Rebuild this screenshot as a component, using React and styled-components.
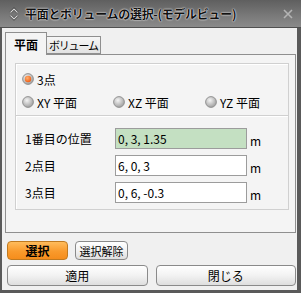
import React from 'react';
import styled, { createGlobalStyle } from 'styled-components';

const GlobalStyle = createGlobalStyle`
  html, body {
    margin: 0;
    padding: 0;
    background: #f0f0f0;
  }
  body {
    font-family: "Noto Sans CJK JP", "Noto Sans", sans-serif;
    font-size: 12px;
    color: #000;
  }
`;

const Window = styled.div`
  width: 301px;
  height: 293px;
  box-sizing: border-box;
  display: flex;
  flex-direction: column;
  background: #f0f0f0;
  border-left: 2px solid #5a5a5a;
  border-right: 4px solid #5a5a5a;
  border-bottom: 3px solid #5a5a5a;
`;

const TitleBar = styled.div`
  height: 28px;
  margin: 0 -4px 0 -2px;
  display: flex;
  align-items: center;
  padding: 0 8px 0 9px;
  box-sizing: border-box;
  background: linear-gradient(#5f5f5f, #7a7a7a 60%, #8a8a8a);
  border-bottom: 1px solid #505050;
`;

const Title = styled.div`
  flex: 1;
  margin-left: 6px;
  font-size: 12px;
  font-weight: 700;
  letter-spacing: -0.3px;
  color: #111;
  text-shadow: 0 0 2px #fff, 0 0 1px #fff;
  white-space: nowrap;
`;

const Body = styled.div`
  flex: 1;
  display: flex;
  flex-direction: column;
  padding: 4px 1px 0 3px;
`;

const Tabs = styled.div`
  display: flex;
  align-items: flex-end;
  height: 22px;
  position: relative;
  z-index: 1;
`;

const Tab = styled.div`
  box-sizing: border-box;
  height: ${p => (p.$active ? '23px' : '18px')};
  margin-bottom: ${p => (p.$active ? '-1px' : '0')};
  padding: 0 ${p => (p.$active ? '8px' : '2px')};
  display: flex;
  align-items: center;
  border: 1px solid #8f8f8f;
  border-bottom: ${p => (p.$active ? 'none' : '1px solid #8f8f8f')};
  background: ${p => (p.$active ? '#f4f4f4' : 'linear-gradient(#f6f6f6, #e2e2e2)')};
  font-weight: ${p => (p.$active ? 700 : 400)};
  font-size: ${p => (p.$active ? '12px' : '11px')};
  letter-spacing: ${p => (p.$active ? '0' : '-1.2px')};
  margin-left: ${p => (p.$active ? '0' : '-1px')};
`;

const Panel = styled.div`
  box-sizing: border-box;
  height: 179px;
  border: 1px solid #8f8f8f;
  background: #f4f4f4;
  padding: 8px 6px 0 9px;
  display: flex;
  flex-direction: column;
`;

const Group = styled.div`
  box-sizing: border-box;
  height: ${p => p.$h}px;
  border: 1px solid #d0d0d0;
  box-shadow: inset 1px 1px 0 #fff;
  padding: ${p => p.$pad};
  & + & {
    border-top: none;
  }
`;

const RadioGrid = styled.div`
  display: grid;
  grid-template-columns: 91px 92px 1fr;
  row-gap: 9px;
`;

const RadioLabel = styled.label`
  display: flex;
  align-items: center;
  gap: 3px;
  height: 14px;
  font-size: 12px;
  white-space: nowrap;
  grid-column: ${p => p.$full ? '1 / -1' : 'auto'};
`;

const Rows = styled.div`
  display: grid;
  grid-template-columns: 90px 132px 1fr;
  row-gap: 6px;
  align-items: center;
`;

const Label = styled.div`
  font-size: 12px;
  white-space: nowrap;
`;

const Field = styled.div`
  box-sizing: border-box;
  height: 21px;
  border: 1px solid #9c9c9c;
  background: ${p => (p.$hl ? '#c4e0c2' : '#fff')};
  padding: 0 2px;
  display: flex;
  align-items: center;
  font-size: 12px;
`;

const Unit = styled.div`
  padding-left: 3px;
  font-size: 12px;
  padding-top: 3px;
`;

const ButtonRow = styled.div`
  display: flex;
  gap: ${p => p.$gap}px;
  margin-top: ${p => p.$mt}px;
  padding-left: 2px;
`;

const Button = styled.button`
  box-sizing: border-box;
  height: ${p => p.$h}px;
  width: ${p => (p.$w ? `${p.$w}px` : 'auto')};
  flex: ${p => (p.$grow ? 1 : 'none')};
  border: 1px solid ${p => (p.$primary ? '#c07a20' : '#8a8a8a')};
  border-radius: 4px;
  background: ${p => (p.$primary
    ? 'linear-gradient(#ffbc5c, #f99a2c 55%, #f58d1c)'
    : 'linear-gradient(#ffffff, #f2f2f2 50%, #dedede)')};
  font-family: inherit;
  font-size: ${p => (p.$small ? '11px' : '12px')};
  font-weight: ${p => (p.$primary ? 700 : 400)};
  color: #000;
  padding: 0;
  white-space: nowrap;
  display: flex;
  align-items: center;
  justify-content: center;
`;

const SortIcon = () => (
  <svg width="10" height="14" viewBox="0 0 10 14">
    <path d="M1.5 5.5 L5 2 L8.5 5.5" fill="none" stroke="#3a3a3a" strokeWidth="2.4" />
    <path d="M1.5 5.5 L5 2 L8.5 5.5" fill="none" stroke="#d8d8d8" strokeWidth="1.1" />
    <path d="M1.5 8.5 L5 12 L8.5 8.5" fill="none" stroke="#3a3a3a" strokeWidth="2.4" />
    <path d="M1.5 8.5 L5 12 L8.5 8.5" fill="none" stroke="#d8d8d8" strokeWidth="1.1" />
  </svg>
);

const CloseIcon = () => (
  <svg width="10" height="10" viewBox="0 0 10 10">
    <path d="M1 1 L9 9 M9 1 L1 9" stroke="#b4b4b4" strokeWidth="1.6" />
  </svg>
);

const Radio = ({ checked }) => (
  <svg width="12" height="12" viewBox="0 0 12 12">
    <defs>
      <radialGradient id="rg" cx="40%" cy="35%" r="70%">
        <stop offset="0" stopColor="#f4f4f4" />
        <stop offset="1" stopColor="#9a9a9a" />
      </radialGradient>
      <radialGradient id="ro" cx="40%" cy="35%" r="70%">
        <stop offset="0" stopColor="#ffb070" />
        <stop offset="1" stopColor="#f05a10" />
      </radialGradient>
    </defs>
    <circle cx="6" cy="6" r="5.4" fill="url(#rg)" stroke="#8c8c8c" strokeWidth="0.9" />
    {checked && <circle cx="6" cy="6" r="3.2" fill="url(#ro)" />}
  </svg>
);

const rows = [
  { label: '1番目の位置', value: '0, 3, 1.35', hl: true },
  { label: '2点目', value: '6, 0, 3' },
  { label: '3点目', value: '0, 6, -0.3' },
];

export default function App() {
  return (
    <>
      <GlobalStyle />
      <Window>
        <TitleBar>
          <SortIcon />
          <Title>平面とボリュームの選択-(モデルビュー)</Title>
          <CloseIcon />
        </TitleBar>
        <Body>
          <Tabs>
            <Tab $active>平面</Tab>
            <Tab>ボリューム</Tab>
          </Tabs>
          <Panel>
            <Group $h={53} $pad="8px 0 0 6px">
              <RadioGrid>
                <RadioLabel $full><Radio checked />3点</RadioLabel>
                <RadioLabel><Radio />XY 平面</RadioLabel>
                <RadioLabel><Radio />XZ 平面</RadioLabel>
                <RadioLabel><Radio />YZ 平面</RadioLabel>
              </RadioGrid>
            </Group>
            <Group $h={94} $pad="12px 0 0 9px">
              <Rows>
                {rows.map(r => (
                  <React.Fragment key={r.label}>
                    <Label>{r.label}</Label>
                    <Field $hl={r.hl}>{r.value}</Field>
                    <Unit>m</Unit>
                  </React.Fragment>
                ))}
              </Rows>
            </Group>
          </Panel>
          <ButtonRow $gap={7} $mt={8}>
            <Button $primary $h={19} $w={61}>選択</Button>
            <Button $small $h={19} $w={53}>選択解除</Button>
          </ButtonRow>
          <ButtonRow $gap={8} $mt={5}>
            <Button $h={21} $grow>適用</Button>
            <Button $h={21} $grow>閉じる</Button>
          </ButtonRow>
        </Body>
      </Window>
    </>
  );
}
